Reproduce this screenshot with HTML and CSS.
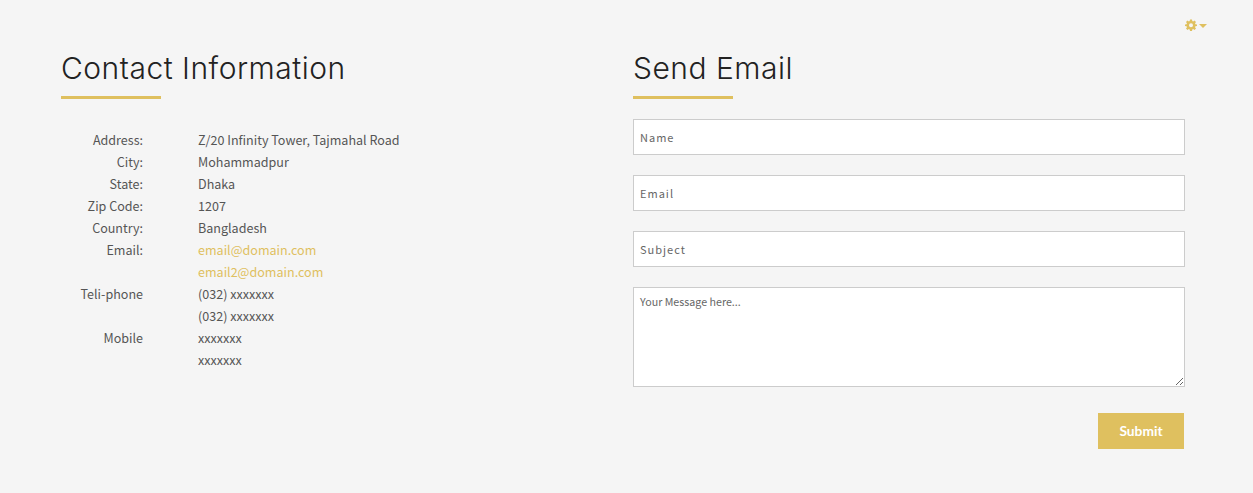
FILE: index.html
```html
<!DOCTYPE html>
<html>
<head>
<meta charset="utf-8" />
<title>Contact</title>
<link rel="stylesheet" href="styles.css">
</head>
<body>
<div class="topbar">
    <a class="settings" href="#">
        <svg class="gear" viewBox="0 0 24 24" width="12" height="12"><path fill-rule="evenodd" d="M10 1h4l.6 3.2 1.700.7L19 3l3 3-1.900 2.700.7 1.700L24 11v3l-3.200.6-.7 1.700L22 19l-3 3-2.700-1.900-1.700.7L14 24h-4l-.6-3.200-1.700-.7L5 22l-3-3 1.900-2.700-.7-1.700L0 14v-3l3.200-.6.7-1.700L2 6l3-3 2.700 1.900 1.700-.7zM12 8.500a4 4 0 1 0 0 8 4 4 0 0 0 0-8z"/></svg>
        <span class="caret"></span>
    </a>
</div>
<div class="columns">
    <section class="contact">
        <h2 class="title">Contact Information</h2>
        <div class="info">
            <span class="label">Address:</span><span>Z/20 Infinity Tower, Tajmahal Road</span>
            <span class="label">City:</span><span>Mohammadpur</span>
            <span class="label">State:</span><span>Dhaka</span>
            <span class="label">Zip Code:</span><span>1207</span>
            <span class="label">Country:</span><span>Bangladesh</span>
            <span class="label">Email:</span><a href="#">email@domain.com</a>
            <span class="label"></span><a href="#">email2@domain.com</a>
            <span class="label">Teli-phone</span><span>(032) xxxxxxx</span>
            <span class="label"></span><span>(032) xxxxxxx</span>
            <span class="label">Mobile</span><span>xxxxxxx</span>
            <span class="label"></span><span>xxxxxxx</span>
        </div>
    </section>
    <section class="send">
        <h2 class="title">Send Email</h2>
        <form class="mailform">
            <input type="text" placeholder="Name" />
            <input type="text" placeholder="Email" />
            <input type="text" placeholder="Subject" />
            <textarea placeholder="Your Message here..."></textarea>
            <button type="button" class="submit">Submit</button>
        </form>
    </section>
</div>
</body>
</html>
```

FILE: styles.css
```css
*{box-sizing:border-box;}
html,body{height:100%;}
body{margin:0; padding:18px 46px 0 61px; background-color:#f5f5f5; color:#555; font-family:"Noto Sans CJK SC", "Noto Sans", sans-serif; font-size:12.55px; overflow:hidden;}
.topbar{display:flex; justify-content:flex-end; height:14px;}
.settings{display:flex; align-items:center; gap:2px; color:#dfc05f; text-decoration:none;}
.gear{fill:#dfc05f; display:block;}
.caret{width:0; height:0; border-left:4px solid transparent; border-right:4px solid transparent; border-top:4px solid #dfc05f; margin-top:2px;}
.columns{display:grid; grid-template-columns:572px 552px; margin-top:16px;}
.title{margin:0 0 20px; height:51px; position:relative; font-family:Inter, "Open Sans", sans-serif; font-weight:300; font-size:30px; line-height:40px; letter-spacing:.5px; color:#222;}
.title:after{content:""; position:absolute; left:0; bottom:0; width:100px; height:3px; background-color:#dfc05f;}
.info{display:grid; grid-template-columns:82px 1fr; column-gap:55px; grid-auto-rows:22px; line-height:22px; margin-top:30px;}
.label{text-align:right;}
.info a{color:#dfc05f; text-decoration:none;}
.mailform{display:flex; flex-direction:column; gap:20px;}
.mailform input,.mailform textarea{display:block; width:552px; border:1px solid #ccc; background-color:#fff; font-family:inherit; color:#555; padding:0 6px; outline:none;}
.mailform input{height:36px; font-size:11px; letter-spacing:1px;}
.mailform textarea{height:100px; font-size:10.7px; padding-top:6px;}
.mailform ::placeholder{color:#666; opacity:1;}
.submit{align-self:flex-end; margin:6px 1px 0 0; padding:0 0 2px; width:86px; height:36px; border:0; background-color:#dfc05f; color:#fff; font-family:Lato, sans-serif; font-weight:700; font-size:13.8px;}
```
